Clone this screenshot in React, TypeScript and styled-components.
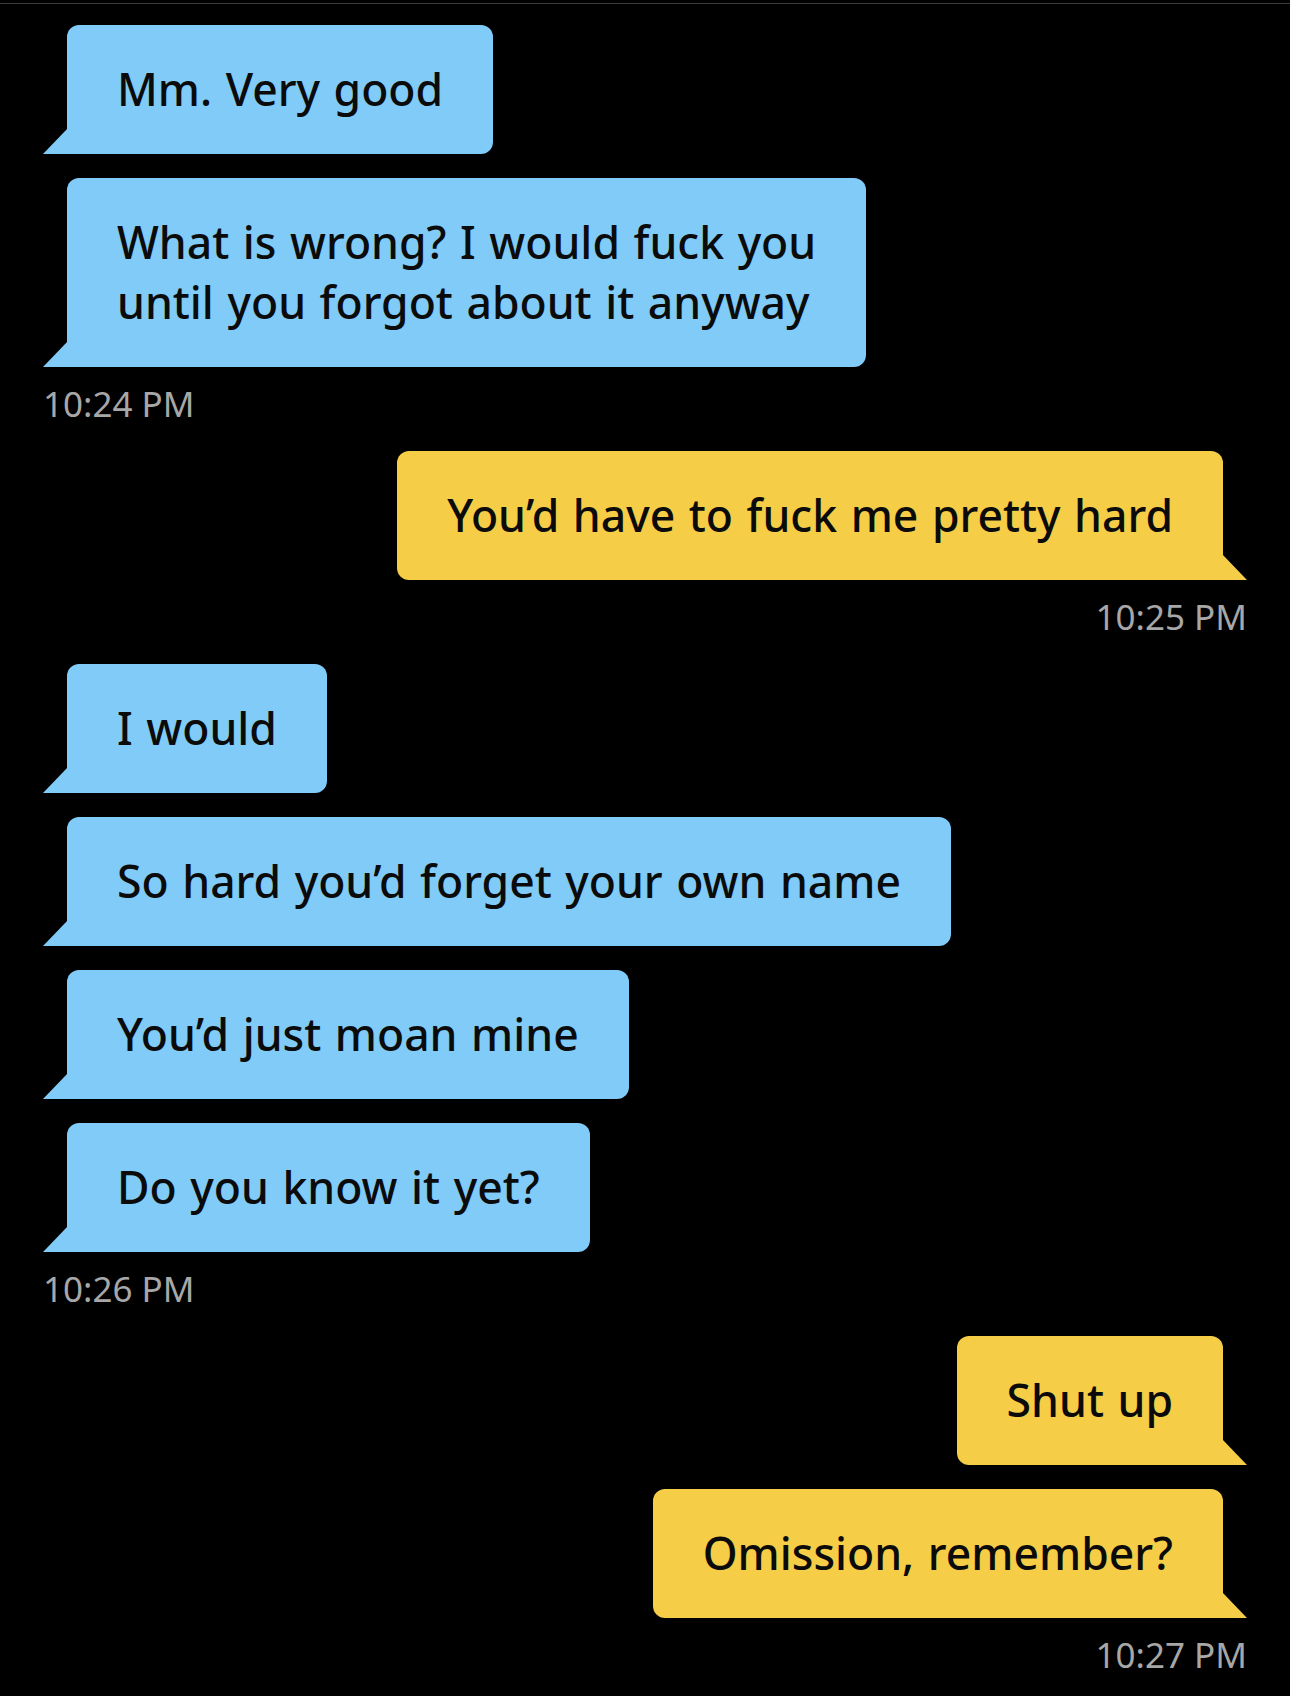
import React from "react"
import styled, { createGlobalStyle, css } from "styled-components"

type Side = "in" | "out"

type Item =
  | { kind: "msg"; side: Side; lines: string[] }
  | { kind: "time"; side: Side; text: string }

const thread: Item[] = [
  { kind: "msg", side: "in", lines: ["Mm. Very good"] },
  { kind: "msg", side: "in", lines: ["What is wrong? I would fuck you", "until you forgot about it anyway"] },
  { kind: "time", side: "in", text: "10:24 PM" },
  { kind: "msg", side: "out", lines: ["You’d have to fuck me pretty hard"] },
  { kind: "time", side: "out", text: "10:25 PM" },
  { kind: "msg", side: "in", lines: ["I would"] },
  { kind: "msg", side: "in", lines: ["So hard you’d forget your own name"] },
  { kind: "msg", side: "in", lines: ["You’d just moan mine"] },
  { kind: "msg", side: "in", lines: ["Do you know it yet?"] },
  { kind: "time", side: "in", text: "10:26 PM" },
  { kind: "msg", side: "out", lines: ["Shut up"] },
  { kind: "msg", side: "out", lines: ["Omission, remember?"] },
  { kind: "time", side: "out", text: "10:27 PM" },
]

const GlobalStyle = createGlobalStyle`
  html, body {
    margin: 0;
    padding: 0;
    background: #000;
  }
  body {
    font-family: "Noto Sans", "Open Sans", sans-serif;
  }
`

const Screen = styled.div`
  min-height: 1696px;
  background: #000;
  display: flex;
  flex-direction: column;
`

const TopRule = styled.div`
  height: 1px;
  margin-top: 3px;
  background: #3a3a3a;
`

const Thread = styled.div`
  display: flex;
  flex-direction: column;
  gap: 24px;
  padding: 21px 43px 0 43px;
`

const Row = styled.div<{ $side: Side }>`
  display: flex;
  justify-content: ${p => (p.$side === "in" ? "flex-start" : "flex-end")};
`

const Bubble = styled.div<{ $side: Side }>`
  position: relative;
  padding: 34px 50px 35px;
  font-size: 44.5px;
  font-weight: 500;
  line-height: 60px;
  word-spacing: 2px;
  color: #0b0b0b;
  white-space: nowrap;

  &::after {
    content: "";
    position: absolute;
    bottom: 0;
    width: 25px;
    height: 26px;
  }

  ${p =>
    p.$side === "in"
      ? css`
          margin-left: 24px;
          background: #80cbf7;
          border-radius: 12px 12px 12px 0;
          &::after {
            left: -24px;
            background: #80cbf7;
            clip-path: polygon(100% 0, 100% 100%, 0 100%);
          }
        `
      : css`
          margin-right: 24px;
          background: #f5cd47;
          border-radius: 12px 12px 0 12px;
          &::after {
            right: -24px;
            background: #f5cd47;
            clip-path: polygon(0 0, 100% 100%, 0 100%);
          }
        `}
`

const Line = styled.div``

const Stamp = styled.div<{ $side: Side }>`
  margin: -7px 0 3px;
  font-size: 35px;
  font-weight: 400;
  line-height: 40px;
  color: #a7a7a7;
  text-align: ${p => (p.$side === "in" ? "left" : "right")};
`

const App = () => {
  return (
    <Screen>
      <GlobalStyle />
      <TopRule />
      <Thread>
        {thread.map((item, i) =>
          item.kind === "msg" ? (
            <Row key={i} $side={item.side}>
              <Bubble $side={item.side}>
                {item.lines.map(line => (
                  <Line key={line}>{line}</Line>
                ))}
              </Bubble>
            </Row>
          ) : (
            <Stamp key={i} $side={item.side}>
              {item.text}
            </Stamp>
          )
        )}
      </Thread>
    </Screen>
  )
}

export default App
